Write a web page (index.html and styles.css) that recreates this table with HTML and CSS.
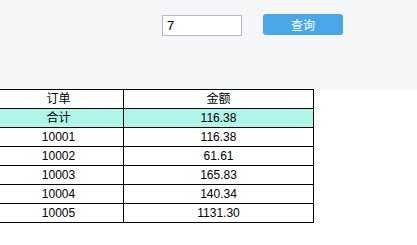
FILE: index.html
```html
<!DOCTYPE html>
<html lang="zh">
<head>
<meta charset="utf-8">
<link rel="stylesheet" href="styles.css">
</head>
<body>
<div class="toolbar">
  <input class="field" type="text" value="7">
  <button class="btn" type="button">查询</button>
</div>
<table class="grid">
  <colgroup><col class="c1"><col class="c2"></colgroup>
  <tr><td>订单</td><td>金额</td></tr>
  <tr class="total"><td>合计</td><td>116.38</td></tr>
  <tr><td>10001</td><td>116.38</td></tr>
  <tr><td>10002</td><td>61.61</td></tr>
  <tr><td>10003</td><td>165.83</td></tr>
  <tr><td>10004</td><td>140.34</td></tr>
  <tr><td>10005</td><td>1131.30</td></tr>
</table>
</body>
</html>
```
FILE: styles.css
```css
html, body {
  margin: 0;
  padding: 0;
  background: #ffffff;
  font-family: "Liberation Sans", "Noto Sans CJK SC", sans-serif;
}
.toolbar {
  height: 89px;
  box-sizing: border-box;
  background: #f5f6f8;
  display: flex;
  align-items: flex-start;
  padding: 14px 0 0 162px;
  gap: 21px;
}
.field {
  box-sizing: border-box;
  width: 80px;
  height: 21px;
  margin: 1px 0 0 0;
  border: 1px solid #b7b9cb;
  padding: 0 4px;
  font-family: "Liberation Sans", sans-serif;
  font-size: 13px;
  color: #000;
  background: #fff;
  outline: none;
}
.btn {
  box-sizing: border-box;
  width: 80px;
  height: 21px;
  border: none;
  border-radius: 3px;
  background: #4aa8e9;
  color: #fff;
  font-family: "Noto Sans CJK SC", sans-serif;
  font-size: 12px;
  padding: 0;
  line-height: 21px;
}
.grid {
  border-collapse: collapse;
  table-layout: fixed;
  width: 320px;
  margin-left: -7px;
  font-size: 12px;
  color: #000;
}
.c1 { width: 130px; }
.c2 { width: 190px; }
.grid td {
  border: 1px solid #000;
  padding: 0;
  height: 18px;
  line-height: 16px;
  text-align: center;
}
.grid .total td { background: #b0f5e9; }
```
